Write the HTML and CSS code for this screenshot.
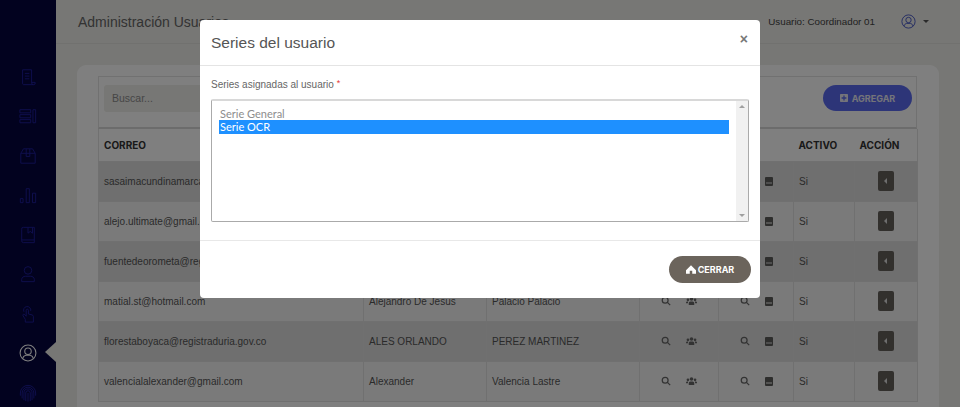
FILE: index.html
```html
<!DOCTYPE html>
<html lang="es">
<head>
<meta charset="utf-8">
<title>Administración Usuarios</title>
<link rel="stylesheet" href="styles.css">
</head>
<body>
<div class="app">
  <aside class="sidebar">
    <hr class="side-rule">
    <nav class="side-nav">
      <a class="side-item"><svg viewBox="0 0 20 20"><path d="M4 2h10v14.500a2 2 0 0 0 2 2H5a1.500 1.500 0 0 1-1-1.500zM6.500 6h5M6.500 9h5M6.500 12h5M14 16h4a2 2 0 0 1-2 2.500"/></svg></a>
      <a class="side-item"><svg viewBox="0 0 20 20"><path d="M1 3h12v3.500H1zM1 8.500h12V12H1zM1 14h12v3.500H1zM15.500 3h3v14.500h-3z"/></svg></a>
      <a class="side-item"><svg viewBox="0 0 20 20"><path d="M2 7l3-5h10l3 5v11H2zM2 7h16M8 2v8.500h4V2"/></svg></a>
      <a class="side-item"><svg viewBox="0 0 20 20"><path d="M1.500 14h3v4.500h-3zM8 3h3.500v15.500H8zM15 8h3.500v10.500H15z"/></svg></a>
      <a class="side-item"><svg viewBox="0 0 20 20"><path d="M3 4a2 2 0 0 1 2-2.500h12v17H5a2 2 0 0 1-2-2zM3 15.500h14M10 1.500V8l2.500-2L15 8V1.500"/></svg></a>
      <a class="side-item"><svg viewBox="0 0 20 20"><circle cx="10" cy="6" r="4.200"/><path d="M3 18.500v-2.500c0-2 2-3.500 4-3.500h6c2 0 4 1.500 4 3.500v2.500z"/></svg></a>
      <a class="side-item"><svg viewBox="0 0 20 20"><path d="M7 19v-3L4.500 12c-.8-1.500 1-2.500 2-1.200l1.500 1.700V6c0-1.800 2.500-1.800 2.500 0v4l4 1c1 .3 1.500 1 1.500 2v6z"/><path d="M5.500 7.500a4 4 0 1 1 7.500-1"/></svg></a>
      <a class="side-item side-active"><svg viewBox="0 0 20 20"><circle cx="10" cy="10" r="8.800"/><circle cx="10" cy="8" r="3.600"/><path d="M4 16.200c.5-2.200 2-3.400 3.500-3.700h5c1.500.3 3 1.500 3.500 3.700"/></svg></a>
      <a class="side-item"><svg viewBox="0 0 20 20"><path d="M1.500 13V10a8.500 8.500 0 0 1 17 0v3M3.500 16v-6a6.500 6.500 0 0 1 13 0v6M5.500 18v-8a4.500 4.500 0 0 1 9 0v8M7.500 19v-9a2.500 2.500 0 0 1 5 0v9M10 10v9.500"/></svg></a>
    </nav>
  </aside>
  <div class="content">
    <header class="topbar">
      <h1 class="page-title">Administración Usuarios</h1>
      <div class="user-area">
        <span class="user-name">Usuario: Coordinador 01</span>
        <svg class="user-icon" viewBox="0 0 20 20"><circle cx="10" cy="10" r="8.800"/><circle cx="10" cy="8" r="3.600"/><path d="M4 16.200c.5-2.200 2-3.400 3.500-3.700h5c1.500.3 3 1.500 3.500 3.700"/></svg>
        <span class="caret"></span>
      </div>
    </header>
    <main class="main">
      <section class="card">
        <div class="toolbar">
          <div class="search">Buscar...</div>
          <button class="add-btn"><svg viewBox="0 0 10 10"><path fill-rule="evenodd" d="M1 0h8a1 1 0 0 1 1 1v8a1 1 0 0 1-1 1H1a1 1 0 0 1-1-1V1a1 1 0 0 1 1-1zM4.200 2v2.200H2v1.600h2.200V8h1.600V5.800H8V4.200H5.800V2z"/></svg>AGREGAR</button>
        </div>
        <table class="grid">
          <colgroup>
            <col class="c-mail"><col class="c-name"><col class="c-last"><col class="c-a"><col class="c-b"><col class="c-act"><col class="c-do">
          </colgroup>
          <thead>
            <tr><th>CORREO</th><th>NOMBRES</th><th>APELLIDOS</th><th>ROLES</th><th>SERIES</th><th>ACTIVO</th><th>ACCIÓN</th></tr>
          </thead>
          <tbody>
            <tr><td>sasaimacundinamarca@registraduria.gov.co</td><td>ADRIANA</td><td>LOPEZ</td>
              <td><div class="icons"><svg viewBox="0 0 12 12"><circle cx="5" cy="5" r="3.500"/><path d="M7.700 7.700l3.300 3.300"/></svg><svg class="solid" viewBox="0 0 14 10"><circle cx="7" cy="2.500" r="2.300"/><circle cx="2.500" cy="3.500" r="1.700"/><circle cx="11.500" cy="3.500" r="1.700"/><path d="M3.500 10V7.500a2 2 0 0 1 2-2h3a2 2 0 0 1 2 2V10zM0 8V7a1.500 1.500 0 0 1 1.500-1.500h1.200L2.500 8zM14 8V7a1.500 1.500 0 0 0-1.500-1.500h-1.200l.2 2.500z"/></svg></div></td>
              <td><div class="icons"><svg viewBox="0 0 12 12"><circle cx="5" cy="5" r="3.500"/><path d="M7.700 7.700l3.300 3.300"/></svg><svg class="solid book" viewBox="0 0 8 9"><path fill-rule="evenodd" d="M1 0h6a1 1 0 0 1 1 1v7a1 1 0 0 1-1 1H1a1 1 0 0 1-1-1V1a1 1 0 0 1 1-1zM1 5.500v1h6v-1z"/></svg></div></td>
              <td>Si</td><td class="center"><span class="act-btn"></span></td></tr>
            <tr><td>alejo.ultimate@gmail.com</td><td>Alejandro</td><td>Ultimate</td>
              <td><div class="icons"><svg viewBox="0 0 12 12"><circle cx="5" cy="5" r="3.500"/><path d="M7.700 7.700l3.300 3.300"/></svg><svg class="solid" viewBox="0 0 14 10"><circle cx="7" cy="2.500" r="2.300"/><circle cx="2.500" cy="3.500" r="1.700"/><circle cx="11.500" cy="3.500" r="1.700"/><path d="M3.500 10V7.500a2 2 0 0 1 2-2h3a2 2 0 0 1 2 2V10zM0 8V7a1.500 1.500 0 0 1 1.500-1.500h1.200L2.500 8zM14 8V7a1.500 1.500 0 0 0-1.500-1.500h-1.200l.2 2.500z"/></svg></div></td>
              <td><div class="icons"><svg viewBox="0 0 12 12"><circle cx="5" cy="5" r="3.500"/><path d="M7.700 7.700l3.300 3.300"/></svg><svg class="solid book" viewBox="0 0 8 9"><path fill-rule="evenodd" d="M1 0h6a1 1 0 0 1 1 1v7a1 1 0 0 1-1 1H1a1 1 0 0 1-1-1V1a1 1 0 0 1 1-1zM1 5.500v1h6v-1z"/></svg></div></td>
              <td>Si</td><td class="center"><span class="act-btn"></span></td></tr>
            <tr><td>fuentedeorometa@registraduria.gov.co</td><td>Alejandro</td><td>Fuente</td>
              <td><div class="icons"><svg viewBox="0 0 12 12"><circle cx="5" cy="5" r="3.500"/><path d="M7.700 7.700l3.300 3.300"/></svg><svg class="solid" viewBox="0 0 14 10"><circle cx="7" cy="2.500" r="2.300"/><circle cx="2.500" cy="3.500" r="1.700"/><circle cx="11.500" cy="3.500" r="1.700"/><path d="M3.500 10V7.500a2 2 0 0 1 2-2h3a2 2 0 0 1 2 2V10zM0 8V7a1.500 1.500 0 0 1 1.500-1.500h1.200L2.500 8zM14 8V7a1.500 1.500 0 0 0-1.500-1.500h-1.200l.2 2.500z"/></svg></div></td>
              <td><div class="icons"><svg viewBox="0 0 12 12"><circle cx="5" cy="5" r="3.500"/><path d="M7.700 7.700l3.300 3.300"/></svg><svg class="solid book" viewBox="0 0 8 9"><path fill-rule="evenodd" d="M1 0h6a1 1 0 0 1 1 1v7a1 1 0 0 1-1 1H1a1 1 0 0 1-1-1V1a1 1 0 0 1 1-1zM1 5.500v1h6v-1z"/></svg></div></td>
              <td>Si</td><td class="center"><span class="act-btn"></span></td></tr>
            <tr><td>matial.st@hotmail.com</td><td>Alejandro De Jesus</td><td>Palacio Palacio</td>
              <td><div class="icons"><svg viewBox="0 0 12 12"><circle cx="5" cy="5" r="3.500"/><path d="M7.700 7.700l3.300 3.300"/></svg><svg class="solid" viewBox="0 0 14 10"><circle cx="7" cy="2.500" r="2.300"/><circle cx="2.500" cy="3.500" r="1.700"/><circle cx="11.500" cy="3.500" r="1.700"/><path d="M3.500 10V7.500a2 2 0 0 1 2-2h3a2 2 0 0 1 2 2V10zM0 8V7a1.500 1.500 0 0 1 1.500-1.500h1.200L2.500 8zM14 8V7a1.500 1.500 0 0 0-1.500-1.500h-1.200l.2 2.500z"/></svg></div></td>
              <td><div class="icons"><svg viewBox="0 0 12 12"><circle cx="5" cy="5" r="3.500"/><path d="M7.700 7.700l3.300 3.300"/></svg><svg class="solid book" viewBox="0 0 8 9"><path fill-rule="evenodd" d="M1 0h6a1 1 0 0 1 1 1v7a1 1 0 0 1-1 1H1a1 1 0 0 1-1-1V1a1 1 0 0 1 1-1zM1 5.500v1h6v-1z"/></svg></div></td>
              <td>Si</td><td class="center"><span class="act-btn"></span></td></tr>
            <tr><td>florestaboyaca@registraduria.gov.co</td><td>ALES ORLANDO</td><td>PEREZ MARTINEZ</td>
              <td><div class="icons"><svg viewBox="0 0 12 12"><circle cx="5" cy="5" r="3.500"/><path d="M7.700 7.700l3.300 3.300"/></svg><svg class="solid" viewBox="0 0 14 10"><circle cx="7" cy="2.500" r="2.300"/><circle cx="2.500" cy="3.500" r="1.700"/><circle cx="11.500" cy="3.500" r="1.700"/><path d="M3.500 10V7.500a2 2 0 0 1 2-2h3a2 2 0 0 1 2 2V10zM0 8V7a1.500 1.500 0 0 1 1.500-1.500h1.200L2.500 8zM14 8V7a1.500 1.500 0 0 0-1.500-1.500h-1.200l.2 2.500z"/></svg></div></td>
              <td><div class="icons"><svg viewBox="0 0 12 12"><circle cx="5" cy="5" r="3.500"/><path d="M7.700 7.700l3.300 3.300"/></svg><svg class="solid book" viewBox="0 0 8 9"><path fill-rule="evenodd" d="M1 0h6a1 1 0 0 1 1 1v7a1 1 0 0 1-1 1H1a1 1 0 0 1-1-1V1a1 1 0 0 1 1-1zM1 5.500v1h6v-1z"/></svg></div></td>
              <td>Si</td><td class="center"><span class="act-btn"></span></td></tr>
            <tr><td>valencialalexander@gmail.com</td><td>Alexander</td><td>Valencia Lastre</td>
              <td><div class="icons"><svg viewBox="0 0 12 12"><circle cx="5" cy="5" r="3.500"/><path d="M7.700 7.700l3.300 3.300"/></svg><svg class="solid" viewBox="0 0 14 10"><circle cx="7" cy="2.500" r="2.300"/><circle cx="2.500" cy="3.500" r="1.700"/><circle cx="11.500" cy="3.500" r="1.700"/><path d="M3.500 10V7.500a2 2 0 0 1 2-2h3a2 2 0 0 1 2 2V10zM0 8V7a1.500 1.500 0 0 1 1.500-1.500h1.200L2.500 8zM14 8V7a1.500 1.500 0 0 0-1.500-1.500h-1.200l.2 2.500z"/></svg></div></td>
              <td><div class="icons"><svg viewBox="0 0 12 12"><circle cx="5" cy="5" r="3.500"/><path d="M7.700 7.700l3.300 3.300"/></svg><svg class="solid book" viewBox="0 0 8 9"><path fill-rule="evenodd" d="M1 0h6a1 1 0 0 1 1 1v7a1 1 0 0 1-1 1H1a1 1 0 0 1-1-1V1a1 1 0 0 1 1-1zM1 5.500v1h6v-1z"/></svg></div></td>
              <td>Si</td><td class="center"><span class="act-btn"></span></td></tr>
          </tbody>
        </table>
      </section>
    </main>
  </div>
</div>
<div class="backdrop">
  <div class="modal">
    <div class="modal-head">
      <h2 class="modal-title">Series del usuario</h2>
      <span class="modal-close">×</span>
    </div>
    <div class="modal-body">
      <div class="field-label">Series asignadas al usuario <span class="req">*</span></div>
      <div class="listbox">
        <div class="options">
          <div class="option">Serie General</div>
          <div class="option option-on">Serie OCR</div>
        </div>
        <div class="scrollbar"><span class="arrow-up"></span><span class="arrow-down"></span></div>
      </div>
    </div>
    <div class="modal-foot">
      <button class="close-btn"><svg viewBox="0 0 12 10"><path fill-rule="evenodd" d="M6 0l6 6v4H0V6zM4.500 6.500V10h3V6.500z"/></svg>CERRAR</button>
    </div>
  </div>
</div>
</body>
</html>
```
FILE: styles.css
```css
* { box-sizing: border-box; }
html, body { margin: 0; height: 100%; overflow: hidden; }
body { font-family: "Liberation Sans", Arial, sans-serif; color: #212529; background: #eeeeea; }

.app { display: flex; height: 407px; overflow: hidden; }

.sidebar { width: 56px; flex: none; background: #04043f; display: flex; flex-direction: column; align-items: center; padding-top: 46px; }
.side-rule { width: 35px; height: 1px; margin: 0; border: 0; background: #8a8a8a; }
.side-nav { display: flex; flex-direction: column; margin-top: 11px; width: 100%; }
.side-item { height: 39.500px; display: flex; align-items: center; justify-content: center; position: relative; }
.side-item svg { width: 18px; height: 18px; fill: none; stroke: #1f1fa0; stroke-width: 1; }
.side-active svg { stroke: #fff; width: 18px; height: 18px; stroke-width: 1.200; }
.side-active::after { content: ""; position: absolute; right: 0; top: 8px; border: 10px solid transparent; border-right: 11px solid #eeeeea; border-left-width: 0; }

.content { flex: 1; min-width: 0; display: flex; flex-direction: column; }
.topbar { height: 44px; flex: none; border-bottom: 1px solid #e2e2de; display: flex; align-items: center; justify-content: space-between; padding: 0 31px 0 22px; }
.page-title { margin: 0; font-size: 14px; font-weight: 400; color: #666; }
.user-area { display: flex; align-items: center; }
.user-name { font-size: 9.800px; color: #444; }
.user-icon { width: 15px; height: 15px; margin-left: 26px; fill: none; stroke: #3f51c4; stroke-width: 1.200; }
.caret { margin-left: 7px; border: 3px solid transparent; border-top-color: #555; border-bottom-width: 0; }

.main { flex: 1; padding: 21px 21px 0 21px; min-height: 0; }
.card { background: #fff; border-radius: 9px 9px 0 0; padding: 11px 22px 0 21px; height: 400px; }

.toolbar { height: 53px; border: 1px solid #e3e3e3; border-bottom: 2px solid #d8d8d8; display: flex; align-items: flex-start; justify-content: space-between; padding: 8px 4px 0 5px; }
.search { width: 200px; height: 27px; background: #eeeeea; border-radius: 3px; font-size: 10.500px; color: #8d8d8d; line-height: 27px; padding-left: 8px; }
.add-btn { width: 89px; height: 26px; border: 0; border-radius: 13px; background: #5a6af0; color: #e8e8f4; font: 700 9px "Inter", sans-serif; display: flex; align-items: center; justify-content: center; gap: 4px; padding: 0; }
.add-btn svg { width: 8px; height: 8px; fill: #e8e8f4; }

.grid { width: 819px; border-collapse: collapse; table-layout: fixed; font-size: 10px; color: #333; }
.c-mail { width: 265px; } .c-name { width: 123px; } .c-last { width: 153px; } .c-a { width: 79px; } .c-b { width: 75px; } .c-act { width: 61px; } .c-do { width: 63px; }
.grid thead tr { border: 1px solid #e3e3e3; border-top: 0; }
.grid th { height: 32px; text-align: left; font: 700 10px "Inter", sans-serif; color: #333; padding: 0 5px; }
.grid td { height: 40px; padding: 0 5px; border: 1px solid #e0e0e0; overflow: hidden; white-space: nowrap; color: #555; }
.grid tbody tr:nth-child(odd) { background: #dedede; }
.grid tbody tr:nth-child(even) { background: #f5f5f5; }
.grid .center { text-align: center; padding: 0; }
.icons { display: flex; align-items: center; justify-content: center; gap: 15px; }
.icons svg { width: 10px; height: 10px; fill: none; stroke: #666; stroke-width: 1.500; }
.icons svg.solid { fill: #666; stroke: none; width: 11px; height: 8px; }
.icons svg.book { width: 8px; height: 9px; fill: #5c5c5a; }
.act-btn { display: inline-block; width: 16px; height: 20px; border-radius: 2px; background: #64605a; position: relative; vertical-align: middle; }
.act-btn::after { content: ""; position: absolute; left: 6px; top: 7px; border: 3px solid transparent; border-right-color: #ddd; border-left-width: 0; }

.backdrop { position: fixed; inset: 0; background: rgba(0, 0, 0, .5); display: flex; justify-content: center; align-items: flex-start; padding-top: 20px; }
.modal { width: 560px; height: 278px; background: #fff; border-radius: 4px; display: flex; flex-direction: column; }
.modal-head { height: 46px; flex: none; border-bottom: 1px solid #e4e4e4; display: flex; justify-content: space-between; align-items: center; padding: 0 12px 0 11px; }
.modal-title { margin: 0; font-size: 15.500px; font-weight: 400; color: #555; }
.modal-close { font: 700 14px "Liberation Sans", sans-serif; color: #777; margin-top: -7px; }
.modal-body { height: 175px; flex: none; padding: 13px 11px 0 11px; border-bottom: 1px solid #e8e8e8; }
.field-label { font-size: 10px; color: #666; height: 20px; }
.req { color: #e53935; font-size: 9px; position: relative; top: -2px; }
.listbox { width: 538px; height: 123px; border: 1px solid #aaa; border-top: 2px solid #d8d8d8; border-radius: 2px; display: flex; }
.options { flex: 1; padding: 6px 7px 0 7px; font: 11px "Lato", sans-serif; color: #8d8d8d; }
.option { height: 13px; line-height: 13px; padding-left: 1px; }
.option-on { height: 14px; background: #1e90ff; color: #fff; }
.scrollbar { width: 12px; background: #f1f1f1; position: relative; }
.arrow-up, .arrow-down { position: absolute; left: 3px; border: 3px solid transparent; }
.arrow-up { top: 4px; border-bottom-color: #a0a0a0; border-top-width: 0; }
.arrow-down { bottom: 4px; border-top-color: #a0a0a0; border-bottom-width: 0; }
.modal-foot { flex: 1; display: flex; justify-content: flex-end; align-items: flex-start; padding: 15px 9px 0 0; }
.close-btn { width: 82px; height: 27px; border: 0; border-radius: 14px; background: #6b645c; color: #fff; font: 700 9px "Inter", sans-serif; display: flex; align-items: center; justify-content: center; gap: 2px; padding: 0; }
.close-btn svg { width: 10px; height: 9px; fill: #fff; }
```
